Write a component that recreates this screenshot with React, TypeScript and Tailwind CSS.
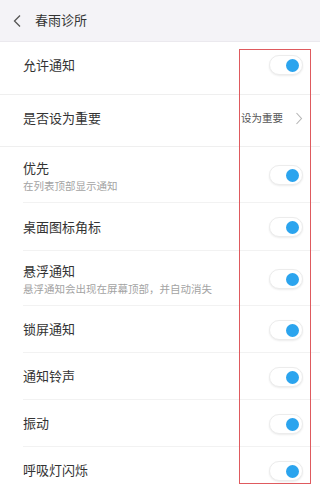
import React from "react";

function Toggle() {
  return (
    <div className="relative w-[34px] h-[20px] rounded-full bg-white border border-[#ececec] shadow-[0_1px_2px_rgba(0,0,0,0.08)]">
      <div className="absolute right-[3px] top-[3px] w-[13px] h-[13px] rounded-full bg-[#2ba4ee]" />
    </div>
  );
}

type RowProps = {
  title: string;
  sub?: string;
  h: string;
  right?: React.ReactNode;
  divider?: "inset" | "full" | "none";
  extra?: string;
  textExtra?: string;
};

function Row({ title, sub, h, right, divider = "inset", extra = "", textExtra = "" }: RowProps) {
  return (
    <div className={`relative ${h}`}>
      <div className={`flex items-center justify-between h-full pl-[23px] pr-[17px] ${extra}`}>
        <div className={`flex flex-col ${textExtra}`}>
          <span className="text-[13px] leading-[17px] text-[#333333]">{title}</span>
          {sub && <span className="text-[10.5px] leading-[15px] mt-[2px] text-[#a3a3a3]">{sub}</span>}
        </div>
        {right ?? <Toggle />}
      </div>
      {divider === "inset" && <div className="absolute bottom-0 left-[23px] right-0 h-px bg-[#f2f2f2]" />}
      {divider === "full" && <div className="absolute bottom-0 left-0 right-0 h-px bg-[#efefef]" />}
    </div>
  );
}

export default function App() {
  return (
    <div
      className="relative w-[320px] h-[491px] overflow-hidden bg-white"
      style={{ fontFamily: '"Noto Sans", "Noto Sans CJK SC", sans-serif' }}
    >
      <div className="flex items-center h-[42px] bg-[#f4f3f7] border-b border-[#ebe9ee]">
        <svg width="20" height="20" viewBox="0 0 20 20" className="ml-[7px]">
          <path d="M13 4.5 L7.5 10 L13 15.5" fill="none" stroke="#555" strokeWidth="1.3" />
        </svg>
        <span className="ml-[8px] text-[13px] text-[#333333] leading-none">春雨诊所</span>
      </div>
      <Row title="允许通知" h="h-[53px]" divider="full" extra="pb-[7px]" />
      <Row
        title="是否设为重要"
        h="h-[52px]"
        divider="full"
        extra="pb-[5px]"
        right={
          <div className="flex items-center">
            <span className="text-[10.5px] text-[#555555] mr-[12px]">设为重要</span>
            <svg width="8" height="13" viewBox="0 0 8 13">
              <path d="M1.5 1 L6.5 6.5 L1.5 12" fill="none" stroke="#b5b5b5" strokeWidth="1.1" />
            </svg>
          </div>
        }
      />
      <Row title="优先" sub="在列表顶部显示通知" h="h-[56px]" textExtra="mt-[4px]" />
      <Row title="桌面图标角标" h="h-[48px]" />
      <Row title="悬浮通知" sub="悬浮通知会出现在屏幕顶部，并自动消失" h="h-[55px]" textExtra="mt-[2px]" />
      <Row title="锁屏通知" h="h-[47px]" />
      <Row title="通知铃声" h="h-[47px]" />
      <Row title="振动" h="h-[47px]" />
      <Row title="呼吸灯闪烁" h="h-[47px]" divider="none" />
      <div className="absolute left-[239px] top-[49px] w-[72px] h-[435px] border border-[#df5a5e] pointer-events-none" />
    </div>
  );
}
